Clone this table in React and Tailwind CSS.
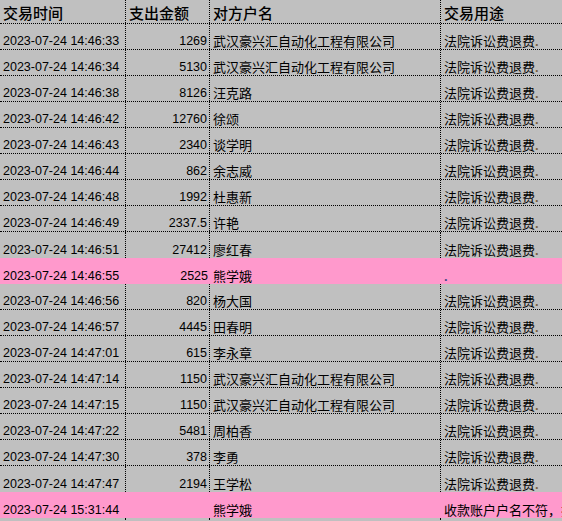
import React from 'react'

const CO = '武汉豪兴汇自动化工程有限公司'
const NOTE = '法院诉讼费退费'

const rows = [
  ['14:46:33', '1269', CO],
  ['14:46:34', '5130', CO],
  ['14:46:38', '8126', '汪克路'],
  ['14:46:42', '12760', '徐颂'],
  ['14:46:43', '2340', '谈学明'],
  ['14:46:44', '862', '余志威'],
  ['14:46:48', '1992', '杜惠新'],
  ['14:46:49', '2337.5', '许艳'],
  ['14:46:51', '27412', '廖红春'],
  ['14:46:55', '2525', '熊学娥', 'dot'],
  ['14:46:56', '820', '杨大国'],
  ['14:46:57', '4445', '田春明'],
  ['14:47:01', '615', '李永章'],
  ['14:47:14', '1150', CO],
  ['14:47:15', '1150', CO],
  ['14:47:22', '5481', '周柏香'],
  ['14:47:30', '378', '李勇'],
  ['14:47:47', '2194', '王学松'],
  ['15:31:44', '', '熊学娥', 'reject'],
]

const isPink = (r) => r && r[3] !== undefined

function Note({ kind }) {
  if (kind === 'dot') return <span className="text-[#4a4a88] font-bold">.</span>
  if (kind === 'reject') return <span>收款账户户名不符，拒</span>
  return (
    <span>
      {NOTE}
      <span className="text-[#7a6440] font-bold">.</span>
    </span>
  )
}

export default function App() {
  return (
    <div className="w-[562px] h-[521px] overflow-hidden bg-[#c0c0c0] text-black font-['Liberation_Sans','Noto_Sans_CJK_SC',sans-serif] whitespace-nowrap">
      {/* header */}
      <div className="flex h-[24px] border-b border-dotted border-black text-[15px] font-medium leading-[18px]">
        <div className="w-[126px] shrink-0 border-r border-dotted border-black pl-[3px] flex items-end">交易时间</div>
        <div className="w-[84px] shrink-0 border-r border-dotted border-black pl-[3px] flex items-end">支出金额</div>
        <div className="w-[231px] shrink-0 border-r border-dotted border-black pl-[3px] flex items-end">对方户名</div>
        <div className="flex-1 pl-[3px] flex items-end">交易用途</div>
      </div>

      {rows.map((r, i) => {
        const pink = isPink(r)
        const line = !pink && !isPink(rows[i + 1])
        const cell = pink ? '' : 'border-r border-dotted border-black'
        return (
          <div
            key={i}
            className={`flex h-[26px] leading-[15px] ${pink ? 'bg-[#ff99cc]' : ''} ${line ? 'border-b border-dotted border-black' : ''}`}
          >
            <div className={`w-[126px] shrink-0 pl-[3px] flex items-end text-[12.5px] ${cell}`}>2023-07-24 {r[0]}</div>
            <div className={`w-[84px] shrink-0 pr-[2px] flex items-end justify-end text-[12.5px] ${cell}`}>{r[1]}</div>
            <div className={`w-[231px] shrink-0 pl-[3px] flex items-end text-[13px] ${cell}`}>{r[2]}</div>
            <div className="flex-1 pl-[3px] flex items-end text-[13px] overflow-hidden">
              <Note kind={r[3]} />
            </div>
          </div>
        )
      })}

      {/* next empty row, cut off */}
      <div className="flex h-[26px]">
        <div className="w-[126px] shrink-0 border-r border-dotted border-black" />
        <div className="w-[84px] shrink-0 border-r border-dotted border-black" />
        <div className="w-[231px] shrink-0 border-r border-dotted border-black" />
        <div className="flex-1" />
      </div>
    </div>
  )
}
